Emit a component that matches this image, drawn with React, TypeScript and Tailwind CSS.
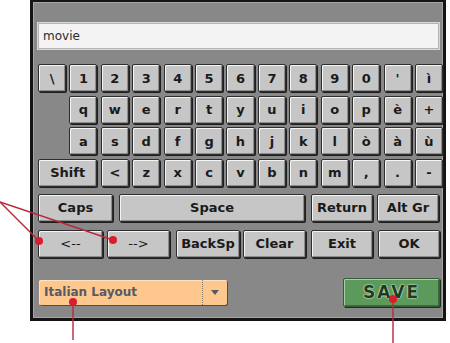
import React from "react"

const keyFace =
    "flex items-center justify-center h-[28px] rounded-[2px] bg-[#c6c6c6] border border-[#2e2e2e] shadow-[inset_1px_1px_0_#f4f4f4,inset_-1px_-1px_0_#8c8c8c,1px_1px_0_#1e1e1e] text-[13px] font-bold text-[#1a1a1a] leading-none"

const row1 = ["\\", "1", "2", "3", "4", "5", "6", "7", "8", "9", "0", "'", "ì"]
const row2 = ["q", "w", "e", "r", "t", "y", "u", "i", "o", "p", "è", "+"]
const row3 = ["a", "s", "d", "f", "g", "h", "j", "k", "l", "ò", "à", "ù"]
const row4 = ["<", "z", "x", "c", "v", "b", "n", "m", ",", ".", "-"]

function Key({ label, className = "" }: { label: string; className?: string }) {
    return <div className={`${keyFace} ${className}`}>{label}</div>
}

export default function App() {
    return (
        <div className="relative w-[450px] h-[343px] bg-white overflow-hidden" style={{ fontFamily: '"DejaVu Sans", "Liberation Sans", sans-serif' }}>
            <div className="ml-[30px] w-[416px] h-[321px] border-[3px] border-[#141414] border-t-[2px] bg-[#888888]">
                <div className="h-full border border-[#a6a6a6] pl-[4px] pt-[20px]">
                    {/* text field */}
                    <div className="w-[401px] h-[26px] bg-[#f3f3f3] border border-[#b4b4b4] shadow-[0_0_0_1px_#d8d8d8] flex items-center pl-[4px]">
                        <span className="text-[12px] text-[#2a2a2a]">movie</span>
                    </div>

                    {/* letter rows */}
                    <div className="mt-[15px] w-[405px] grid grid-cols-[repeat(13,1fr)] gap-x-[3.4px] gap-y-[3.6px]">
                        {row1.map((k, i) => <Key key={"a" + i} label={k} />)}
                        <div />
                        {row2.map((k, i) => <Key key={"b" + i} label={k} />)}
                        <div />
                        {row3.map((k, i) => <Key key={"c" + i} label={k} />)}
                        <Key label="Shift" className="col-span-2" />
                        {row4.map((k, i) => <Key key={"d" + i} label={k} />)}
                    </div>

                    {/* function rows */}
                    <div className="mt-[7px] flex">
                        <Key label="Caps" className="w-[75px]" />
                        <Key label="Space" className="w-[186px] ml-[6px]" />
                        <Key label="Return" className="w-[62px] ml-[6px]" />
                        <Key label="Alt Gr" className="w-[62px] ml-[4px]" />
                    </div>
                    <div className="mt-[8px] flex">
                        <Key label="<--" className="w-[65px] font-normal" />
                        <Key label="-->" className="w-[63px] ml-[4px] font-normal" />
                        <Key label="BackSp" className="w-[64px] ml-[6px]" />
                        <Key label="Clear" className="w-[63px] ml-[3px]" />
                        <Key label="Exit" className="w-[62px] ml-[5px]" />
                        <Key label="OK" className="w-[62px] ml-[5px]" />
                    </div>

                    {/* bottom bar */}
                    <div className="mt-[20px] flex items-start justify-between w-[402px]">
                        <div className="mt-[2px] ml-[1px] w-[188px] h-[25px] flex items-center bg-[#fdc78e] rounded-[2px] shadow-[inset_1px_1px_0_#ffe2c2,1px_1px_0_#5a4a3a]">
                            <span className="flex-1 pl-[5px] text-[12px] font-bold text-[#555a66]">Italian Layout</span>
                            <div className="h-full border-l border-dotted border-[#8a7a6a] w-[25px] flex items-center justify-center">
                                <svg width="8" height="5" viewBox="0 0 8 5"><path d="M0 0h8L4 5z" fill="#555a66" /></svg>
                            </div>
                        </div>
                        <div className="w-[97px] h-[29px] flex items-center justify-center bg-[#5c9a5c] rounded-[2px] border border-[#3a5a3a] shadow-[inset_1px_1px_0_#a4d0a4,inset_-1px_-1px_0_#3d6b3d,1px_1px_0_#1e2e1e]">
                            <span className="text-[17px] font-black tracking-[2px] text-[#1f3a1f]" style={{ textShadow: "0 0 2px #e8ffe8, 0 0 1px #ffffff" }}>SAVE</span>
                        </div>
                    </div>
                </div>
            </div>

            {/* callout annotations */}
            <svg className="absolute left-0 top-0 pointer-events-none" width="450" height="343">
                <g stroke="#b8283a" strokeWidth="1.4" fill="none">
                    <line x1="0" y1="202" x2="39" y2="241" />
                    <line x1="0" y1="202" x2="113" y2="240" />
                    <line x1="73" y1="302" x2="73" y2="340" />
                    <line x1="393" y1="299" x2="393" y2="343" />
                </g>
                <g fill="#d81e2e">
                    <circle cx="39" cy="241" r="4" />
                    <circle cx="113" cy="240" r="4" />
                    <circle cx="73" cy="302" r="4" />
                    <circle cx="393" cy="299" r="4" />
                </g>
            </svg>
        </div>
    )
}
